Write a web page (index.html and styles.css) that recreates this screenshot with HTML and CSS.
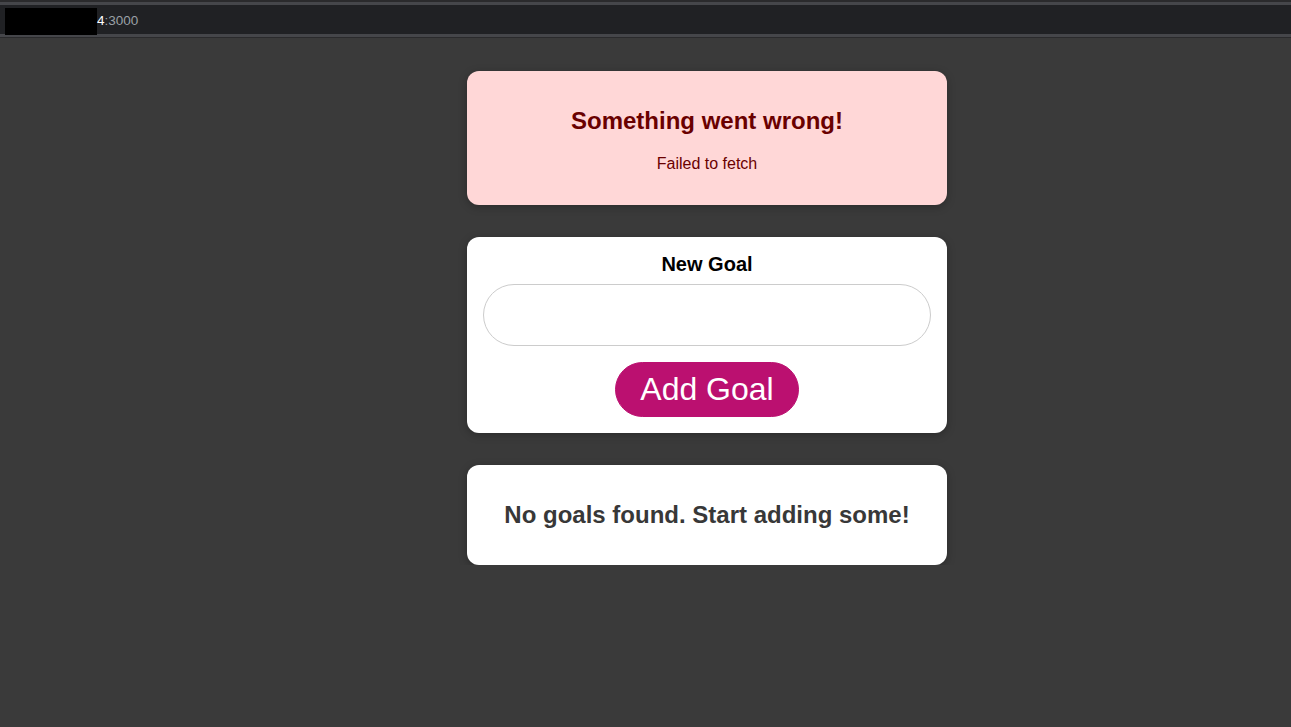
FILE: index.html
```
<!DOCTYPE html>
<html lang="en">
<head>
<meta charset="utf-8">
<title>Goals</title>
<link rel="stylesheet" href="styles.css">
</head>
<body>
<div class="topbar">
  <div class="topbar-line"></div>
  <div class="address">
    <span class="redact"></span><span class="host">4</span><span class="port">:3000</span>
  </div>
  <div class="topbar-line bottom"></div>
</div>
<main class="page">
  <section class="card error">
    <h2>Something went wrong!</h2>
    <p>Failed to fetch</p>
  </section>
  <section class="card">
    <form class="goal-form">
      <label class="goal-label" for="text">New Goal</label>
      <input class="goal-input" type="text" id="text">
      <div class="actions"><button class="btn" type="button">Add Goal</button></div>
    </form>
  </section>
  <section class="card empty">
    <h2>No goals found. Start adding some!</h2>
  </section>
</main>
</body>
</html>
```
FILE: styles.css
```
* { box-sizing: border-box; }
html, body {
  margin: 0;
  background: #3a3a3a;
  font-family: "Liberation Sans", Arial, sans-serif;
}
.topbar {
  background: #202124;
  border-top: 2px solid #2a2a2c;
  border-bottom: 1px solid #2a2a2c;
}
.topbar-line {
  height: 3px;
  background: #45464a;
}
.address {
  height: 29px;
  display: flex;
  align-items: center;
  padding-left: 5px;
  font-size: 13.5px;
  line-height: 15px;
}
.redact {
  display: inline-block;
  width: 92px;
  height: 27px;
  margin-top: 3px;
  background: #000;
}
.host { color: #ffffff; padding-top: 2px; }
.port { color: #9aa0a6; padding-top: 2px; }
.page {
  width: 480px;
  margin-left: 467px;
  padding-top: 33px;
  display: flex;
  flex-direction: column;
  gap: 32px;
}
.card {
  background: #fff;
  border-radius: 12px;
  padding: 16px;
  box-shadow: 0 2px 8px rgba(0, 0, 0, 0.26);
  text-align: center;
}
.card h2 {
  font-size: 24px;
  margin: 20px 0;
  line-height: 28px;
}
.error {
  background: #ffd7d7;
  color: #6a0000;
}
.error p {
  margin: 0 0 16px;
  font-size: 16px;
  line-height: 18px;
}
.empty h2 { color: #383838; }
.goal-form {
  display: flex;
  flex-direction: column;
}
.goal-label {
  font-weight: bold;
  font-size: 20px;
  line-height: 23px;
  margin-bottom: 8px;
  color: #000;
}
.goal-input {
  height: 62px;
  width: 100%;
  border: 1px solid #ccc;
  border-radius: 31px;
  font: inherit;
  font-size: 24px;
  padding: 0 16px;
  background: #fff;
}
.actions {
  margin-top: 16px;
  display: flex;
  justify-content: center;
}
.btn {
  font-family: inherit;
  font-size: 32px;
  line-height: 37px;
  height: 55px;
  width: 184px;
  padding: 0;
  color: #fff;
  background: #bb1070;
  border: 1px solid #bb1070;
  border-radius: 28px;
  cursor: pointer;
}
```
